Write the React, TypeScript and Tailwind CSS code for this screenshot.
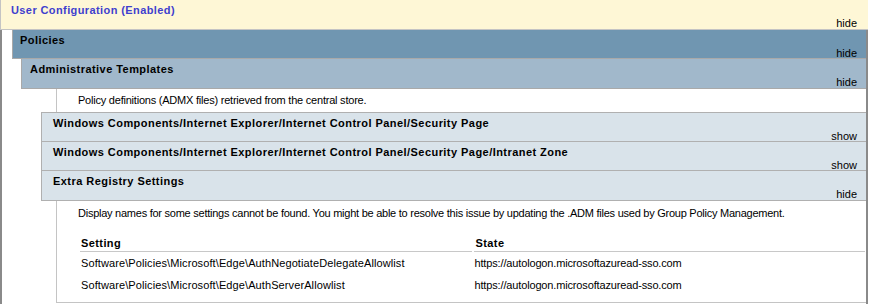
import React from "react";

interface BandProps {
  title: string;
  toggle: string;
  className: string;
}

// Collapsible section header, label sits bottom-right
function Band({ title, toggle, className }: BandProps) {
  return (
    <div className={`flex h-[29px] flex-col pr-[9px] pt-[3px] ${className}`}>
      <span className="font-bold leading-[15px] tracking-[0.45px] whitespace-nowrap">{title}</span>
      <span className="self-end leading-[10px]">{toggle}</span>
    </div>
  );
}

const settings = [
  {
    setting: "Software\\Policies\\Microsoft\\Edge\\AuthNegotiateDelegateAllowlist",
    state: "https://autologon.microsoftazuread-sso.com",
  },
  {
    setting: "Software\\Policies\\Microsoft\\Edge\\AuthServerAllowlist",
    state: "https://autologon.microsoftazuread-sso.com",
  },
];

export default function App() {
  return (
    <div className="h-[304px] w-[872px] overflow-hidden bg-white font-['Liberation_Sans',Arial,sans-serif] text-[11px] text-black">
      {/* User Configuration */}
      <div className="w-[868px]">
        <div className="flex h-[30px] flex-col border-b border-l border-[#c4c4c4] bg-[#fef7d6] pl-[10px] pr-[11px] pt-[3px]">
          <span className="font-bold leading-[15px] tracking-[0.4px] text-[#3f3fce]">User Configuration (Enabled)</span>
          <span className="self-end leading-[10px]">hide</span>
        </div>
      </div>

      <div className="h-[274px] w-[868px] border-x-2 border-[#8a8a8a]">
        {/* Policies */}
        <Band
          title="Policies"
          toggle="hide"
          className="ml-[10px] border-b border-l border-[#a9a9a9] bg-[#7096b1] pl-[7px]"
        />

        {/* Administrative Templates */}
        <Band
          title="Administrative Templates"
          toggle="hide"
          className="ml-[19px] h-[30px] border-b border-l border-[#a9a9a9] bg-[#a1b8cb] pl-[8px]"
        />

        <div className="ml-[54px] h-[23px] border-l border-[#c4c4c4] pl-[21px] leading-[22px] tracking-[-0.22px]">
          Policy definitions (ADMX files) retrieved from the central store.
        </div>

        {/* Windows Components */}
        <div className="ml-[39px]">
          <Band
            title="Windows Components/Internet Explorer/Internet Control Panel/Security Page"
            toggle="show"
            className="border-l border-t border-[#b0b0b0] bg-[#d9e3ea] pl-[11px]"
          />
          <Band
            title="Windows Components/Internet Explorer/Internet Control Panel/Security Page/Intranet Zone"
            toggle="show"
            className="border-l border-t border-[#b0b0b0] bg-[#d9e3ea] pl-[11px]"
          />
          <Band
            title="Extra Registry Settings"
            toggle="hide"
            className="h-[31px] border-y border-l border-[#b0b0b0] bg-[#d9e3ea] pl-[11px]"
          />
        </div>

        {/* Extra Registry Settings content */}
        <div className="ml-[54px] h-[102px] border-b border-l border-[#c4c4c4] pt-[1px]">
          <p className="pl-[21px] leading-[22px] tracking-[-0.25px]">
            Display names for some settings cannot be found. You might be able to resolve this issue by updating the .ADM files used by Group Policy Management.
          </p>

          <div className="ml-[23px] grid w-[785px] grid-cols-2 gap-x-[2px]">
            <div className="border-b border-[#c8c8c8] pl-[1px] pt-[11px] font-bold leading-[16px] tracking-[0.4px]">Setting</div>
            <div className="border-b border-[#c8c8c8] pl-[2px] pt-[11px] font-bold leading-[16px] tracking-[0.4px]">State</div>
            {settings.map((row, i) => (
              <React.Fragment key={i}>
                <div className="pl-[1px] leading-[22px] tracking-[0.1px]">{row.setting}</div>
                <div className="pl-[1px] leading-[22px] tracking-[-0.15px]">{row.state}</div>
              </React.Fragment>
            ))}
          </div>
        </div>
      </div>
    </div>
  );
}
